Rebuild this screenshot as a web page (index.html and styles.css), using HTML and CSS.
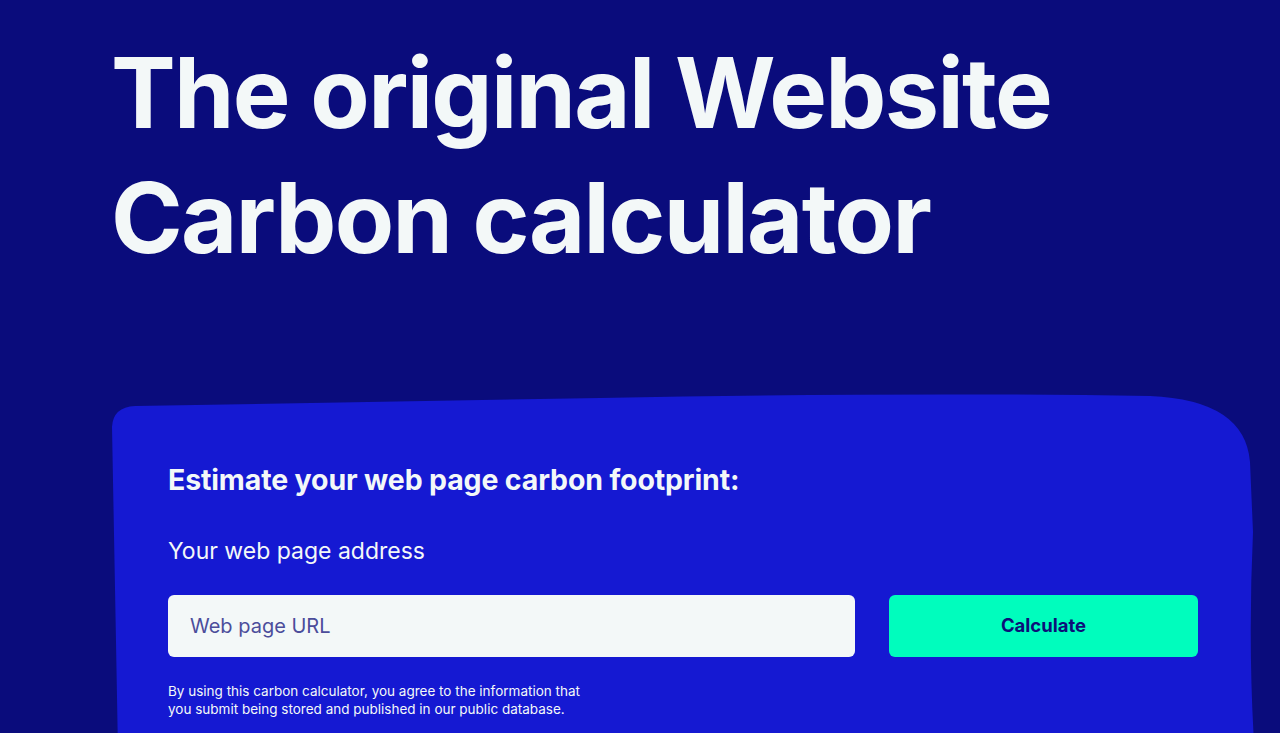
FILE: index.html
```html
<!DOCTYPE html>
<html lang="en">
<head>
<meta charset="utf-8">
<title>Website Carbon Calculator</title>
<link rel="stylesheet" href="styles.css">
</head>
<body>
<main class="page">
  <h1 class="hero-title">The original Website<br>Carbon calculator</h1>
  <section class="card">
    <svg class="card-bg" viewBox="0 0 1146 360" preserveAspectRatio="none" aria-hidden="true">
      <path d="M2 35 Q3 15 25 14 L490 6 Q800 0 1040 4 Q1135 8 1140 70 L1143 140 Q1138 250 1144 350 L1144 360 L8 360 L6 250 Z" fill="#1519d2"/>
    </svg>
    <div class="card-body">
      <h2 class="card-title">Estimate your web page carbon footprint:</h2>
      <label class="field-label" for="url">Your web page address</label>
      <form class="form-row">
        <input id="url" class="url-input" type="text" placeholder="Web page URL">
        <button class="calc-btn" type="button">Calculate</button>
      </form>
      <p class="disclaimer">By using this carbon calculator, you agree to the information that you submit being stored and published in our public database.</p>
    </div>
  </section>
</main>
</body>
</html>
```

FILE: styles.css
```css
html, body {
  margin: 0;
  padding: 0;
  height: 100%;
  overflow: hidden;
}
body {
  background: #0a0c7c;
  font-family: Inter, "Noto Sans", "Liberation Sans", sans-serif;
  color: #f3f8f8;
}
.page {
  padding: 30px 0 0 111px;
}
.hero-title {
  margin: 0;
  font-size: 97px;
  line-height: 125px;
  font-weight: 700;
  letter-spacing: -0.017em;
  color: #f3f8f8;
}
.card {
  position: relative;
  margin: 112px 0 0 -1px;
  width: 1146px;
  height: 360px;
}
.card-bg {
  position: absolute;
  inset: 0;
  width: 100%;
  height: 100%;
}
.card-body {
  position: relative;
  padding: 70px 0 0 58px;
  width: 1030px;
  display: flex;
  flex-direction: column;
}
.card-title {
  margin: 0;
  font-size: 28.5px;
  line-height: 35px;
  font-weight: 700;
  letter-spacing: -0.005em;
}
.field-label {
  margin-top: 40px;
  font-size: 23px;
  line-height: 29px;
  font-weight: 400;
}
.form-row {
  margin: 29px 0 0 0;
  display: flex;
  gap: 34px;
}
.url-input {
  flex: 0 0 687px;
  height: 62px;
  box-sizing: border-box;
  border: none;
  border-radius: 6px;
  background: #f3f8f8;
  padding: 0 22px;
  font-family: inherit;
  font-size: 20px;
  color: #1b1c7a;
  outline: none;
}
.url-input::placeholder {
  color: #4b4d9b;
  opacity: 1;
}
.calc-btn {
  flex: 1;
  height: 62px;
  border: none;
  border-radius: 6px;
  background: #00fdbd;
  color: #0c0f78;
  font-family: inherit;
  font-size: 18.5px;
  font-weight: 700;
  padding-bottom: 3px;
}
.disclaimer {
  margin: 25px 0 0 0;
  max-width: 425px;
  font-size: 13.5px;
  line-height: 18px;
}
```
